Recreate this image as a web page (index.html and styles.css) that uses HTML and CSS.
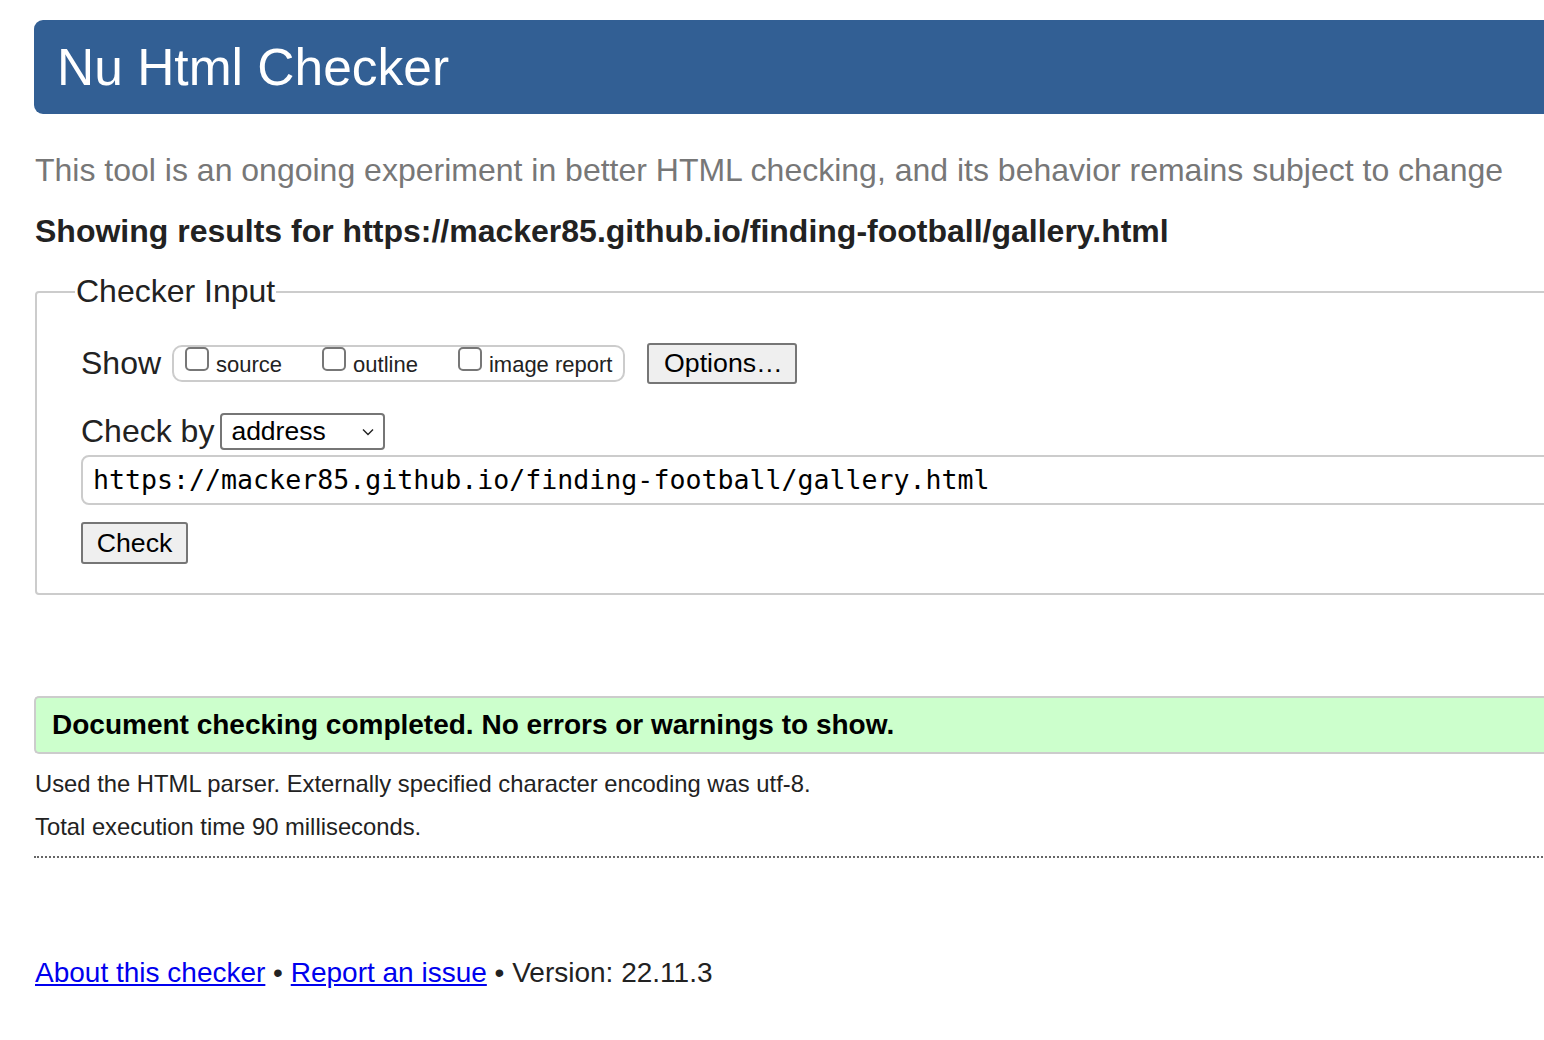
FILE: index.html
```html
<!DOCTYPE html>
<html lang="en">
<head>
<meta charset="utf-8">
<title>Nu Html Checker</title>
<link rel="stylesheet" href="styles.css">
</head>
<body>
<div class="page">
  <h1 class="banner">Nu Html Checker</h1>
  <p class="tagline">This tool is an ongoing experiment in better HTML checking, and its behavior remains subject to change</p>
  <p class="showing">Showing results for https://macker85.github.io/finding-football/gallery.html</p>
  <fieldset class="input-box">
    <legend class="legend">Checker Input</legend>
    <div class="row show-row">
      <span class="label">Show</span>
      <div class="checks">
        <label class="check"><span class="box"></span>source</label>
        <label class="check"><span class="box"></span>outline</label>
        <label class="check"><span class="box"></span>image report</label>
      </div>
      <button class="btn btn-options" type="button">Options…</button>
    </div>
    <div class="row by-row">
      <span class="label">Check by</span>
      <div class="select"><span>address</span>
        <svg class="chev" width="12" height="8" viewBox="0 0 12 8"><path d="M1 1.5 L6 6.5 L11 1.5" fill="none" stroke="#222" stroke-width="1.4"/></svg>
      </div>
    </div>
    <div class="url">https://macker85.github.io/finding-football/gallery.html</div>
    <button class="btn btn-check" type="button">Check</button>
  </fieldset>
  <div class="success">Document checking completed. No errors or warnings to show.</div>
  <p class="details">Used the HTML parser. Externally specified character encoding was utf-8.</p>
  <p class="details">Total execution time 90 milliseconds.</p>
  <hr class="dots">
  <p class="footer"><a href="#">About this checker</a> • <a href="#">Report an issue</a> • Version: 22.11.3</p>
</div>
</body>
</html>
```
FILE: styles.css
```css
html, body {
  margin: 0;
  padding: 0;
  overflow: hidden;
  background: #fff;
}
body {
  font-family: "Liberation Sans", Arial, Helvetica, sans-serif;
  color: #222;
}
.page {
  width: 1700px;
  padding: 20px 0 0 34px;
}
.banner {
  margin: 0;
  height: 94px;
  box-sizing: border-box;
  background: #325f94;
  color: #fff;
  font-weight: normal;
  font-size: 51.5px;
  line-height: 94px;
  padding-left: 23px;
  border-radius: 9px 0 0 9px;
}
.tagline {
  margin: 38px 0 0 1px;
  font-size: 32px;
  line-height: 36px;
  color: #777;
}
.showing {
  margin: 25px 0 0 1px;
  font-size: 32px;
  line-height: 36px;
  font-weight: bold;
  color: #222;
}
.input-box {
  margin: 24px 0 0 1px;
  border: 2px solid #ccc;
  border-radius: 4px;
  padding: 31px 44px 29px 44px;
  min-inline-size: 0;
}
.legend {
  font-size: 32px;
  line-height: 37px;
  padding: 0 1px;
  margin-left: -6px;
  color: #222;
}
.row {
  display: flex;
  align-items: center;
}
.label {
  font-size: 32px;
  color: #222;
}
.show-row {
  height: 44px;
}
.checks {
  display: flex;
  margin-left: 11px;
  border: 2px solid #ccc;
  border-radius: 10px;
  height: 37px;
  box-sizing: border-box;
  align-items: center;
  padding: 4px 11px 0 11px;
}
.check {
  display: flex;
  align-items: center;
  font-size: 22px;
  color: #222;
  margin-right: 40px;
}
.check:last-child { margin-right: 0; }
.box {
  width: 24px;
  height: 24px;
  border: 2px solid #777;
  border-radius: 5px;
  box-sizing: border-box;
  margin: -12px 7px 0 0;
  background: #fff;
}
.btn {
  font-family: "Liberation Sans", Arial, sans-serif;
  background: #efefef;
  border: 2px solid #767676;
  border-radius: 3px;
  color: #000;
  padding: 0;
}
.btn-options {
  margin-left: 22px;
  width: 150px;
  height: 41px;
  font-size: 26.7px;
  padding-left: 2px;
}
.by-row {
  margin-top: 27px;
  height: 38px;
}
.select {
  margin-left: 6px;
  width: 165px;
  height: 37px;
  box-sizing: border-box;
  border: 2px solid #767676;
  border-radius: 4px;
  display: flex;
  align-items: center;
  justify-content: space-between;
  padding: 0 9px 0 9px;
  font-size: 26.5px;
  color: #000;
}
.chev { margin-top: 2px; }
.url {
  margin-top: 5px;
  height: 50px;
  box-sizing: border-box;
  border: 2px solid #ccc;
  border-radius: 8px;
  font-family: "DejaVu Sans Mono", "Liberation Mono", monospace;
  font-size: 26.6px;
  line-height: 46px;
  padding-left: 10px;
  color: #000;
}
.btn-check {
  display: block;
  margin-top: 17px;
  width: 107px;
  height: 42px;
  font-size: 26.7px;
}
.success {
  margin-top: 101px;
  height: 58px;
  box-sizing: border-box;
  background: #ccffcc;
  border: 2px solid #ccc;
  border-right: none;
  border-radius: 5px 0 0 5px;
  font-weight: bold;
  font-size: 28px;
  line-height: 54px;
  padding-left: 16px;
  color: #000;
}
.details {
  margin: 16px 0 0 1px;
  font-size: 23.8px;
  line-height: 28px;
  color: #222;
}
.details + .details {
  margin-top: 15px;
}
.dots {
  margin: 15px 0 0 0;
  border: none;
  border-top: 2px dotted #666;
  height: 0;
}
.footer {
  margin: 99px 0 0 1px;
  font-size: 28px;
  line-height: 32px;
  color: #222;
}
.footer a {
  color: #0000ee;
}
```
